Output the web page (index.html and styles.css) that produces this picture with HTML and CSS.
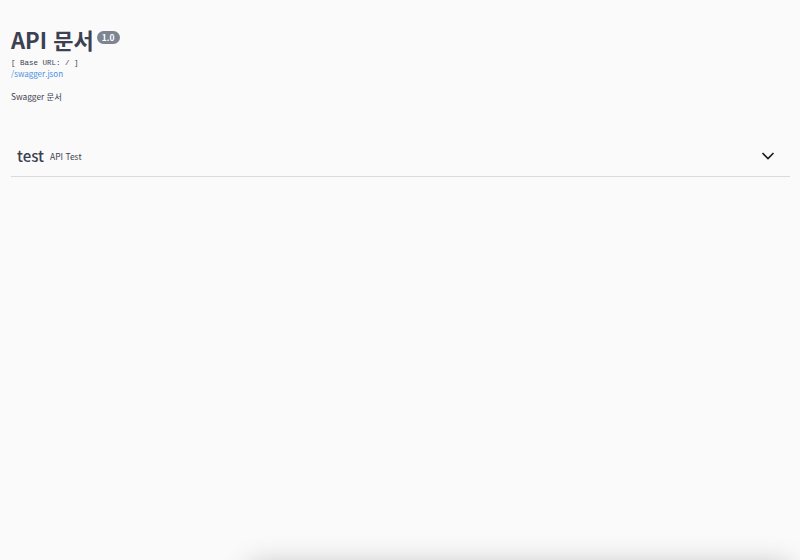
FILE: index.html
```html
<!DOCTYPE html>
<html lang="ko">
<head>
    <meta charset="UTF-8">
    <meta name="viewport" content="width=device-width, initial-scale=1.0">
    <title>API 문서</title>
    <link rel="stylesheet" href="styles.css">
</head>
<body>
    <div class="wrapper">
        <section class="info">
            <h2 class="title">API 문서 <span class="version">1.0</span></h2>
            <pre class="base-url">[ Base URL: / ]</pre>
            <a class="spec-link" href="#">/swagger.json</a>
            <div class="description">Swagger 문서</div>
        </section>

        <section class="tag-section">
            <div class="tag-header">
                <span class="tag-name">test</span>
                <span class="tag-desc">API Test</span>
                <svg class="arrow" width="14" height="10" viewBox="0 0 14 10">
                    <path d="M1.5 2 L7 7.5 L12.5 2" fill="none" stroke="#1b1b1b" stroke-width="1.6"/>
                </svg>
            </div>
        </section>
    </div>
    <div class="bottom-panel"></div>
</body>
</html>
```

FILE: styles.css
```css
body {
    margin: 0;
    background: #fafafa;
    font-family: "Noto Sans CJK KR", "Noto Sans", sans-serif;
    color: #3b4151;
    overflow: hidden;
}

.wrapper {
    padding: 0 10px 0 11px;
}

.info {
    padding-top: 26px;
}

.title {
    margin: 0;
    font-size: 22px;
    font-weight: 700;
    line-height: 26px;
    color: #3b4151;
    display: flex;
    align-items: flex-start;
}

.version {
    margin-left: 3px;
    margin-top: 5px;
    background: #7d8492;
    color: #fff;
    font-size: 8.5px;
    font-weight: 700;
    line-height: 13px;
    padding: 0 5px;
    border-radius: 7px;
}

.base-url {
    margin: 6px 0 0;
    font-family: "Liberation Mono", monospace;
    font-size: 7.5px;
    line-height: 10px;
    color: #3b4151;
}

.spec-link {
    display: block;
    font-size: 8px;
    line-height: 11px;
    color: #4990e2;
    text-decoration: none;
}

.description {
    margin-top: 11px;
    font-size: 8.3px;
    line-height: 13px;
}

.tag-section {
    margin-top: 32px;
}

.tag-header {
    display: flex;
    align-items: center;
    padding: 11px 15px 10px 6px;
    border-bottom: 1px solid #d8dade;
}

.tag-name {
    font-size: 15px;
    line-height: 20px;
    font-weight: 500;
    color: #3b4151;
}

.tag-desc {
    flex: 1;
    margin-left: 6px;
    font-size: 8.5px;
}

.arrow {
    display: block;
}

.bottom-panel {
    position: fixed;
    left: 250px;
    right: 10px;
    top: 568px;
    height: 100px;
    background: #fafafa;
    box-shadow: 0 0 28px rgba(0, 0, 0, 0.3);
}
```
